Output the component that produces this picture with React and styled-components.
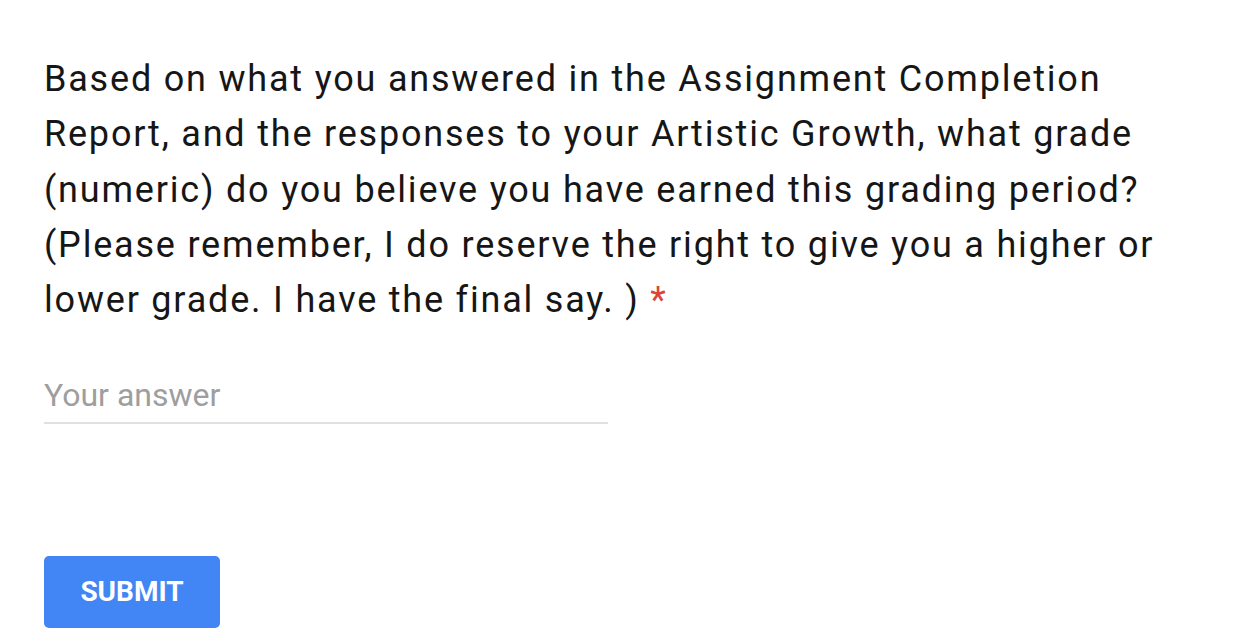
import React from "react";
import styled, { createGlobalStyle } from "styled-components";

const Global = createGlobalStyle`
  html, body {
    margin: 0;
    padding: 0;
    background: #ffffff;
  }
  body {
    font-family: Roboto, "Liberation Sans", Arial, sans-serif;
  }
`;

const Page = styled.main`
  box-sizing: border-box;
  width: 1236px;
  padding: 52px 30px 0 44px;
  display: flex;
  flex-direction: column;
  align-items: flex-start;
`;

const Question = styled.div`
  font-size: 36px;
  line-height: 55.3px;
  letter-spacing: 1.8px;
  color: #161616;
  font-weight: 400;
`;

const Required = styled.span`
  color: #db4437;
`;

const AnswerInput = styled.input`
  box-sizing: content-box;
  margin-top: 39.5px;
  width: 564px;
  height: 54px;
  padding: 0;
  border: none;
  border-bottom: 2px solid #e0e0e0;
  outline: none;
  font-family: Roboto, "Liberation Sans", Arial, sans-serif;
  font-size: 32px;
  color: #202124;
  background: transparent;

  &::placeholder {
    color: #9e9e9e;
    opacity: 1;
  }
`;

const SubmitButton = styled.button`
  margin-top: 132px;
  width: 176px;
  height: 72px;
  border: none;
  border-radius: 5px;
  background: #4285f4;
  color: #ffffff;
  font-family: Roboto, "Liberation Sans", Arial, sans-serif;
  font-size: 28px;
  font-weight: 700;
  letter-spacing: 0;
  text-transform: uppercase;
  cursor: pointer;
  padding: 0;
`;

export default function App() {
  return (
    <>
      <Global />
      <Page>
        <Question>
          Based on what you answered in the Assignment Completion Report, and the
          responses to your Artistic Growth, what grade (numeric) do you believe you
          have earned this grading period? (Please remember, I do reserve the right to
          give you a higher or lower grade. I have the final say. ) <Required>*</Required>
        </Question>
        <AnswerInput type="text" placeholder="Your answer" />
        <SubmitButton type="button">Submit</SubmitButton>
      </Page>
    </>
  );
}
